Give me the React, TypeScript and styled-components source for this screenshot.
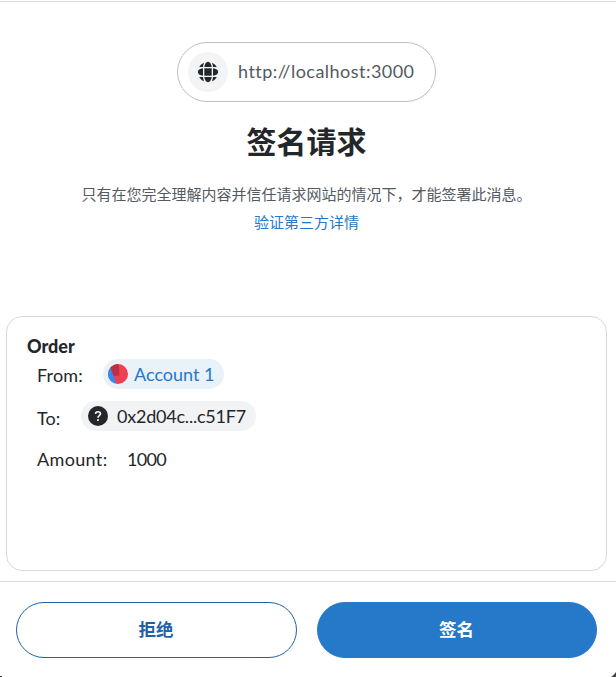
import React from "react";
import styled, { createGlobalStyle } from "styled-components";

const GlobalStyle = createGlobalStyle`
  *, *::before, *::after { box-sizing: border-box; }
  body { margin: 0; background: #fff; overflow: hidden; }
  button { font: inherit; }
`;

const Page = styled.main`
  position: relative;
  display: flex;
  flex-direction: column;
  width: 616px;
  height: 677px;
  padding-top: 1px;
  background: #fff;
  color: #24272a;
  font-family: Lato, "Noto Sans CJK SC", sans-serif;
  font-size: 18px;
  white-space: nowrap;
`;

const Header = styled.header`
  display: flex;
  flex-direction: column;
  align-items: center;
  height: 315px;
  width: 613px;
  padding-top: 40px;
`;

const TopRule = styled.div`
  height: 1px;
  flex: none;
  background: #d6d9dc;
`;

const Origin = styled.div`
  display: flex;
  align-items: center;
  gap: 10px;
  width: 259px;
  height: 60px;
  padding-left: 10px;
  border: 1px solid #bbc0c5;
  border-radius: 30px;
  color: #535a61;
`;

const SiteIcon = styled.div`
  display: grid;
  place-items: center;
  width: 40px;
  height: 40px;
  border-radius: 50%;
  background: #f2f4f6;
`;

const Label = styled.span<{ $spacing?: number; $lift?: number }>`
  letter-spacing: ${({ $spacing = 0 }) => $spacing}px;
  padding-bottom: ${({ $lift = 0 }) => $lift}px;
`;

const Title = styled.h1`
  margin: 17px 0 0;
  font-size: 30px;
  line-height: 44px;
  font-weight: 700;
`;

const Notice = styled.p`
  margin: 17px 0 0;
  font-size: 15px;
  line-height: 28px;
  color: #535a61;
  text-align: center;
`;

const DetailsLink = styled.a`
  font-size: 15px;
  line-height: 28px;
  color: #2678c8;
`;

const Message = styled.section`
  width: 601px;
  height: 255px;
  flex: none;
  margin: 0 0 10px 6px;
  padding: 17px 20px;
  border: 1px solid #d6d9dc;
  border-radius: 16px;
`;

const MessageTitle = styled.h2`
  margin: 0;
  font-size: 18px;
  line-height: 25px;
  font-weight: 900;
`;

const Field = styled.div<{ $height: number }>`
  display: flex;
  align-items: flex-start;
  gap: 20px;
  height: ${({ $height }) => $height}px;
  padding-left: 10px;
  line-height: 30px;
`;

const FieldName = styled.span<{ $width: number; $drop?: number }>`
  width: ${({ $width }) => $width}px;
  padding-top: ${({ $drop = 0 }) => $drop}px;
`;

const Chip = styled.span<{ $account?: boolean; $width: number }>`
  display: flex;
  align-items: center;
  gap: ${({ $account }) => ($account ? 6 : 9)}px;
  width: ${({ $width }) => $width}px;
  height: 30px;
  padding-left: ${({ $account }) => ($account ? 5 : 7)}px;
  border-radius: 15px;
  background: ${({ $account }) => ($account ? "#e9f1f9" : "#f2f3f5")};
  color: ${({ $account }) => ($account ? "#2678c8" : "#24272a")};
`;

const Footer = styled.footer`
  display: flex;
  gap: 20px;
  height: 96px;
  padding: 20px 19px 0 16px;
  border-top: 1px solid #d6d9dc;
`;

const Action = styled.button<{ $primary?: boolean }>`
  flex: 0 0 ${({ $primary }) => ($primary ? 280 : 281)}px;
  height: 56px;
  padding: 0 1px 3px 0;
  border: 1px solid ${({ $primary }) => ($primary ? "#2678c8" : "#1d62a8")};
  border-radius: 28px;
  background: ${({ $primary }) => ($primary ? "#2678c8" : "#fff")};
  color: ${({ $primary }) => ($primary ? "#fff" : "#1d62a8")};
  font-size: 17.5px;
  font-weight: 700;
`;

const WindowCorner = styled.svg<{ $side: "left" | "right" }>`
  position: absolute;
  bottom: 0;
  ${({ $side }) => $side}: 0;
`;

const Globe = () => (
  <svg width="22" height="22" viewBox="0 0 22 22">
    <g fill="#24272a">
      <rect x="7.3" y="7.3" width="7.4" height="7.4" />
      <path d="M7.3 6Q8 1 11 .8Q14 1 14.7 6Z" />
      <path d="M7.3 16Q8 21 11 21.2Q14 21 14.7 16Z" />
      <path d="M6 7.3Q1 8 .8 11Q1 14 6 14.7Z" />
      <path d="M16 7.3Q21 8 21.2 11Q21 14 16 14.7Z" />
      <path d="M6 6H2.2Q3.6 3 7 1.8Q6.2 3.8 6 6Z" />
      <path d="M16 6h3.8Q18.4 3 15 1.8Q15.8 3.8 16 6Z" />
      <path d="M6 16H2.2Q3.6 19 7 20.2Q6.2 18.2 6 16Z" />
      <path d="M16 16h3.8Q18.4 19 15 20.2Q15.8 18.2 16 16Z" />
    </g>
  </svg>
);

const AccountAvatar = () => (
  <svg width="20" height="20" viewBox="0 0 20 20">
    <defs>
      <clipPath id="avatar"><circle cx="10" cy="10" r="10" /></clipPath>
    </defs>
    <g clipPath="url(#avatar)">
      <path fill="#ef3f51" d="M0 0h20v20H0z" />
      <path fill="#348bed" d="M0 0h1.5L8.5 20H0z" />
      <path fill="#bd3044" d="M2 2.5L10.5-1 11.5 11.5 5.5 12z" />
      <path fill="#f57c18" d="M9 0h7v1z" />
    </g>
  </svg>
);

const UnknownAvatar = () => (
  <svg width="20" height="20" viewBox="0 0 20 20" fill="none">
    <circle cx="10" cy="10" r="10" fill="#24272a" />
    <path d="M7.5 7.8Q7.7 5.7 10 5.7T12.5 7.8Q12.5 8.8 11.2 9.7Q10 10.4 10 11.7" stroke="#fff" strokeWidth="1.6" />
    <circle cx="10" cy="14" r="1" fill="#fff" />
  </svg>
);

export default function App() {
  return (
    <>
      <GlobalStyle />
      <Page>
        <TopRule />
        <Header>
          <Origin>
            <SiteIcon><Globe /></SiteIcon>
            <Label $spacing={0.47} $lift={2}>http://localhost:3000</Label>
          </Origin>
          <Title>签名请求</Title>
          <Notice>只有在您完全理解内容并信任请求网站的情况下，才能签署此消息。</Notice>
          <DetailsLink>验证第三方详情</DetailsLink>
        </Header>
        <Message>
          <MessageTitle>Order</MessageTitle>
          <Field $height={42}>
            <FieldName $width={46} $drop={1}><Label $spacing={0.15}>From:</Label></FieldName>
            <Chip $account $width={121}><AccountAvatar /><Label>Account 1</Label></Chip>
          </Field>
          <Field $height={43}>
            <FieldName $width={24} $drop={2}><Label>To:</Label></FieldName>
            <Chip $width={175}><UnknownAvatar /><Label $spacing={-0.22}>0x2d04c...c51F7</Label></Chip>
          </Field>
          <Field $height={30}>
            <FieldName $width={70}><Label $spacing={0.35}>Amount:</Label></FieldName>
            <Label $spacing={-0.7}>1000</Label>
          </Field>
        </Message>
        <Footer>
          <Action>拒绝</Action>
          <Action $primary>签名</Action>
        </Footer>
        <WindowCorner $side="left" width="2" height="1"><path d="M0 0h2v1H0z" fill="#333" /></WindowCorner>
        <WindowCorner $side="right" width="5" height="5"><path d="M5 0Q3 3 0 5h5z" fill="#444" /></WindowCorner>
      </Page>
    </>
  );
}
